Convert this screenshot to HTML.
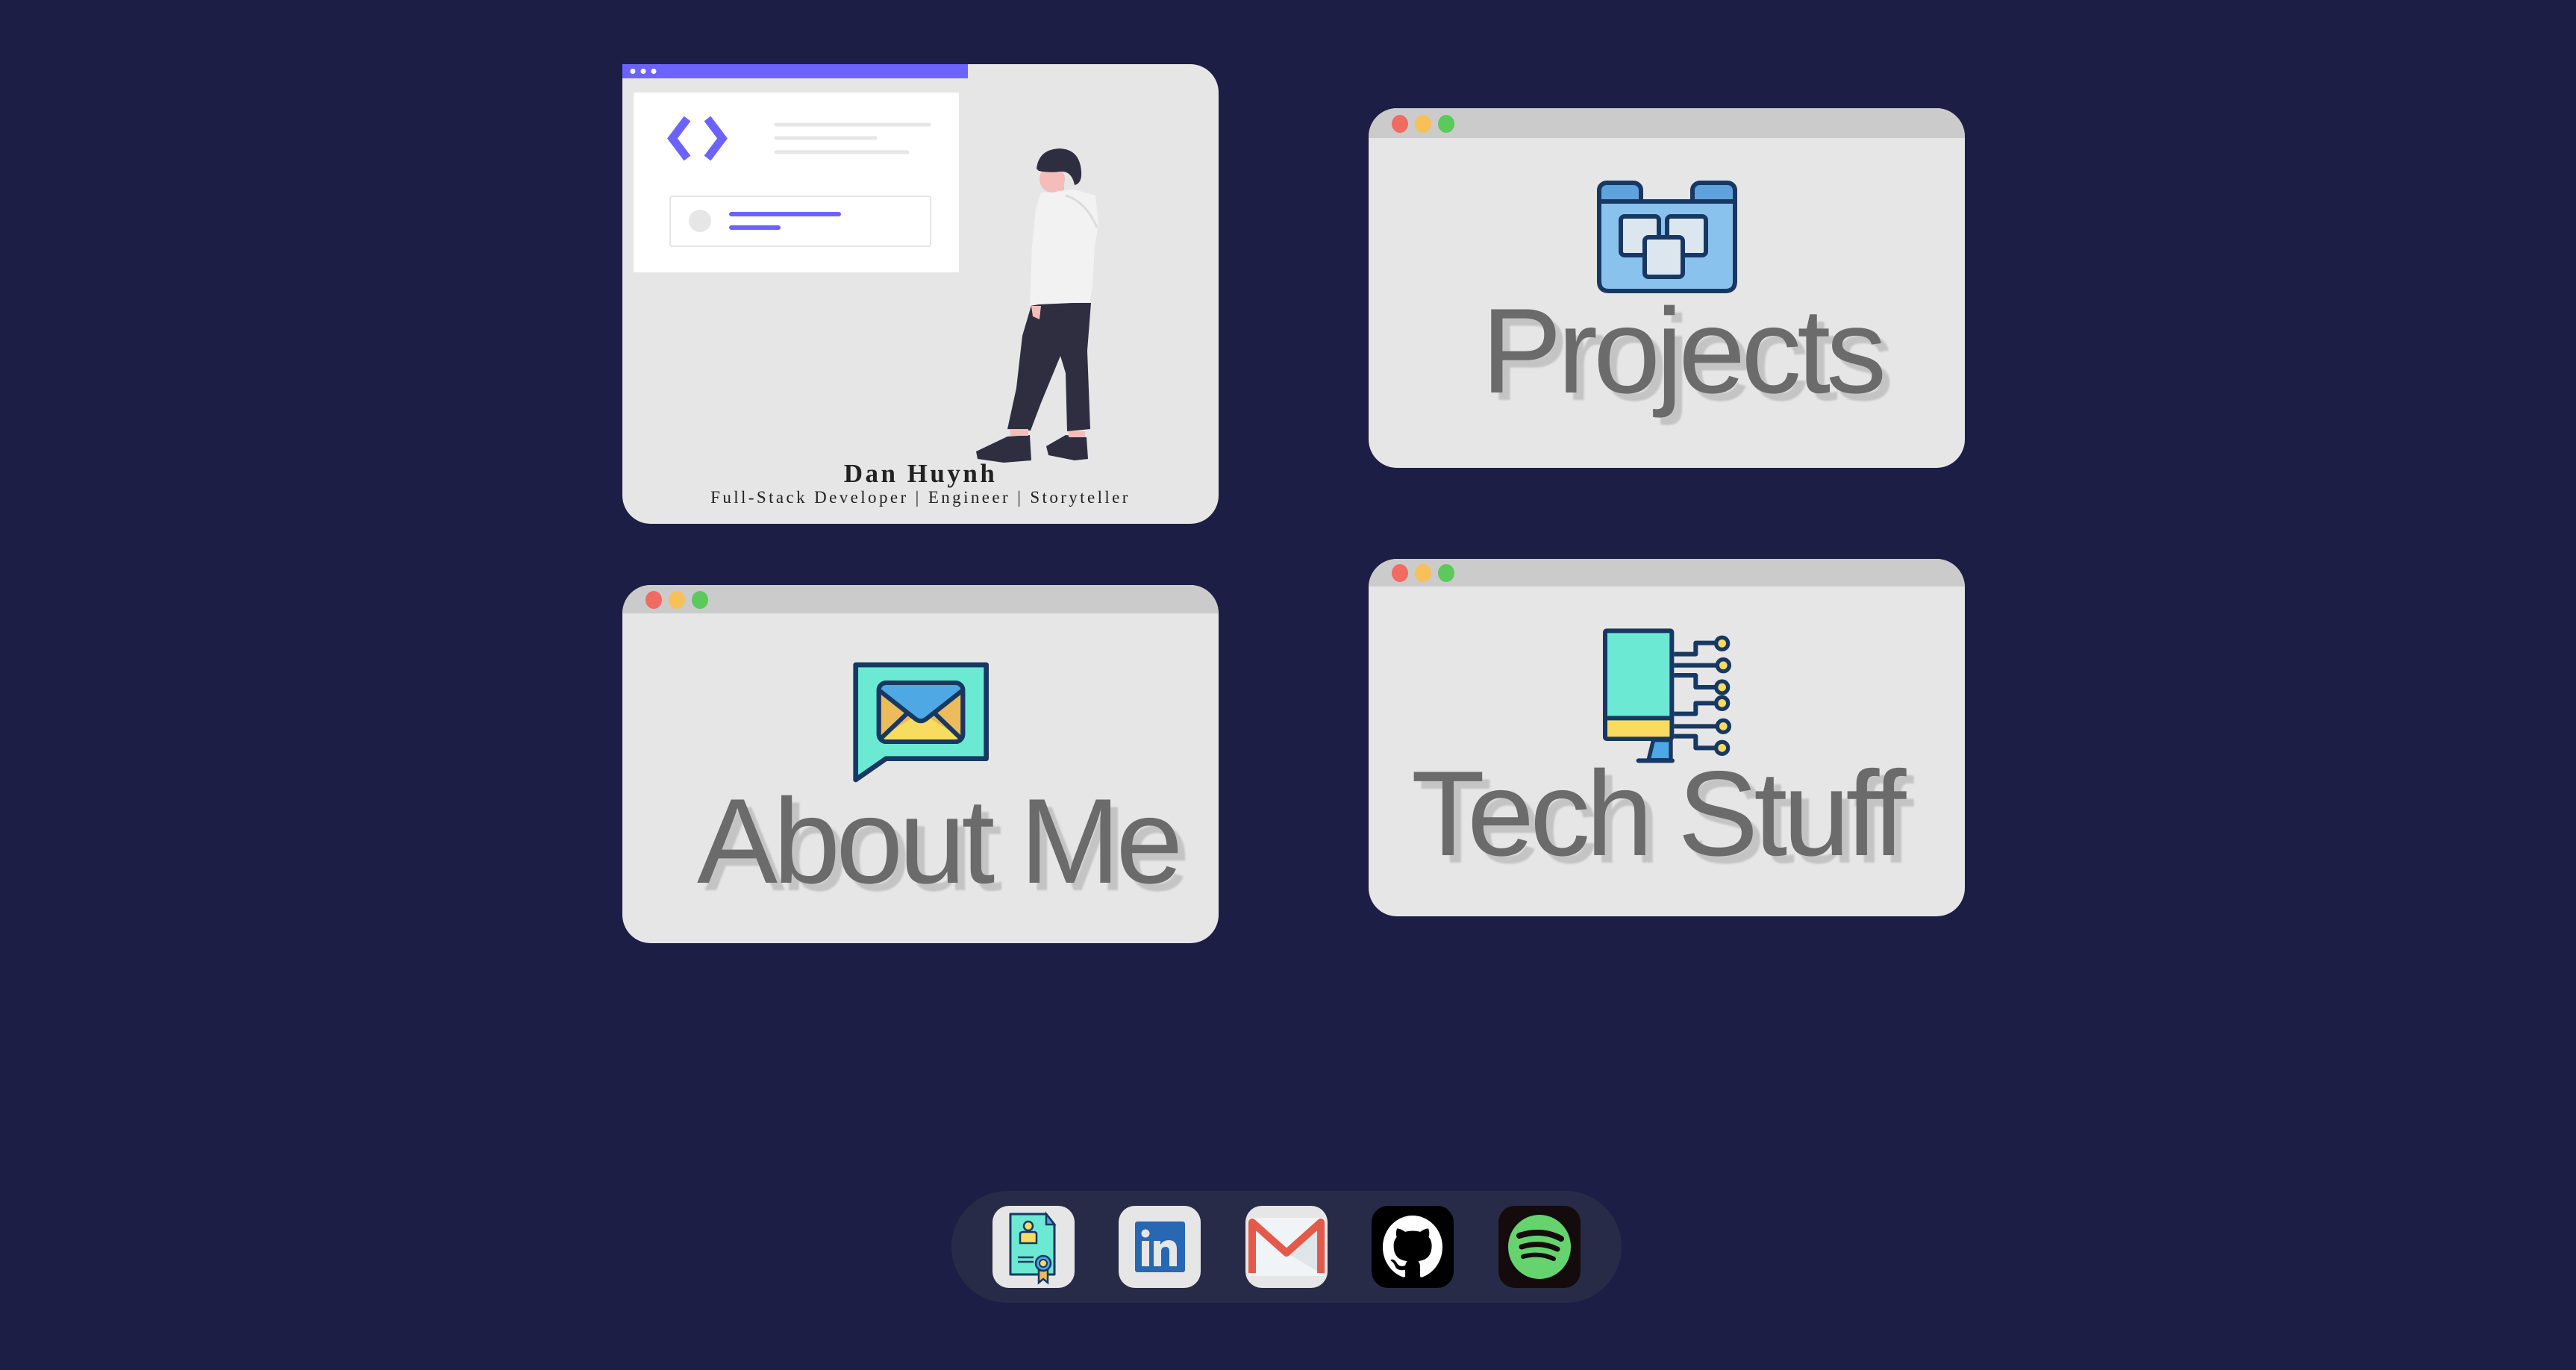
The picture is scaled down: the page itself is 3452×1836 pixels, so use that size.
<!DOCTYPE html>
<html><head><meta charset="utf-8"><style>
html,body{margin:0;padding:0}
body{width:3452px;height:1836px;background:#1c1e45;position:relative;overflow:hidden;font-family:"Liberation Sans",sans-serif}
.card{position:absolute;background:#e6e6e6;border-radius:38px;overflow:hidden}
.bar{position:absolute;left:0;top:0;right:0;background:#cbcbcb}
.dot{position:absolute;width:22px;height:24px;border-radius:50%}
.title{position:absolute;font-size:162px;line-height:1;color:#6b6b6b;letter-spacing:-6px;white-space:nowrap;text-shadow:10px 10px 2px #c4c4c4}
.dock{position:absolute;left:1275px;top:1596px;width:898px;height:150px;border-radius:75px;background:#282b48}
.ic{position:absolute;top:1616px;width:110px;height:110px;border-radius:22px;overflow:hidden}
</style></head><body>

<div class="card" style="left:834px;top:86px;width:799px;height:616px;border-top-left-radius:0"></div>

<div class="card" style="left:1834px;top:145px;width:799px;height:482px">
 <div class="bar" style="height:40px"></div>
 <div class="dot" style="left:31px;top:9px;background:#f16b63"></div>
 <div class="dot" style="left:62px;top:9px;background:#f7c059"></div>
 <div class="dot" style="left:93px;top:9px;background:#5bc95b"></div>
</div>

<div class="card" style="left:834px;top:784px;width:799px;height:480px">
 <div class="bar" style="height:38px"></div>
 <div class="dot" style="left:31px;top:8px;background:#f16b63"></div>
 <div class="dot" style="left:62px;top:8px;background:#f7c059"></div>
 <div class="dot" style="left:93px;top:8px;background:#5bc95b"></div>
</div>

<div class="card" style="left:1834px;top:749px;width:799px;height:479px">
 <div class="bar" style="height:37px"></div>
 <div class="dot" style="left:31px;top:7px;background:#f16b63"></div>
 <div class="dot" style="left:62px;top:7px;background:#f7c059"></div>
 <div class="dot" style="left:93px;top:7px;background:#5bc95b"></div>
</div>

<svg style="position:absolute;left:0;top:0" width="3452" height="1836" viewBox="0 0 3452 1836">
 <rect x="834" y="86" width="463" height="19" fill="#6c63ff"/>
 <circle cx="848" cy="95.5" r="3.5" fill="#fff"/><circle cx="862" cy="95.5" r="3.5" fill="#fff"/><circle cx="876" cy="95.5" r="3.5" fill="#fff"/>
 <rect x="849" y="124" width="436" height="241" fill="#fff"/>
 <polyline points="921,159 901,185.5 921,212" fill="none" stroke="#6c63ff" stroke-width="11"/>
 <polyline points="948,159 968,185.5 948,212" fill="none" stroke="#6c63ff" stroke-width="11"/>
 <g stroke="#e6e6e6" stroke-width="5" stroke-linecap="round">
  <line x1="1040" y1="167" x2="1245" y2="167"/><line x1="1040" y1="185" x2="1173" y2="185"/><line x1="1040" y1="204" x2="1216" y2="204"/>
 </g>
 <rect x="898" y="263" width="349" height="67" rx="3" fill="#fff" stroke="#e6e6e6" stroke-width="2"/>
 <circle cx="938" cy="296" r="15" fill="#e6e6e6"/>
 <g stroke="#6c63ff" stroke-width="6" stroke-linecap="round"><line x1="980" y1="287" x2="1124" y2="287"/><line x1="980" y1="305" x2="1043" y2="305"/></g>
 <path d="M1383,406 L1462,406 L1457,470 L1461,575 L1430,578 L1428,500 L1421,477 L1395,540 L1381,577 L1350,575 L1362,520 L1370,450 Z" fill="#2f2e41"/>
 <path d="M1350,585 L1380,583 L1382,617 L1345,620 L1310,615 L1308,605 Z" fill="#2f2e41"/>
 <path d="M1428,583 L1456,586 L1458,615 L1440,617 L1405,610 L1402,598 Z" fill="#2f2e41"/>
 <rect x="1354" y="575" width="24" height="9" fill="#f4bdb9"/><rect x="1432" y="578" width="22" height="8" fill="#f4bdb9"/>
 <rect x="1410" y="245" width="16" height="18" fill="#f4bdb9"/>
 <path d="M1395,258 L1440,254 L1468,262 L1472,300 L1467,330 L1464,385 L1460,405 L1392,408 L1380,410 L1383,330 L1388,280 Z" fill="#f2f2f2"/>
 <path d="M1428,262 Q1455,270 1470,305" fill="none" stroke="#dcdcdc" stroke-width="3"/>
 <path d="M1382,410 L1395,410 L1393,428 L1384,424 Z" fill="#f4bdb9"/>
 <ellipse cx="1410" cy="240" rx="17" ry="18" fill="#f4bdb9"/>
 <path d="M1389,226 Q1392,200 1420,199 Q1447,200 1449,230 Q1450,246 1440,248 Q1436,228 1420,230 Q1406,232 1392,229 Z" fill="#2f2e41"/>

 <g transform="translate(2140,242)" stroke="#173862" stroke-width="6" stroke-linejoin="round">
  <rect x="3" y="3" width="56" height="36" rx="10" fill="#5ea3dc"/>
  <rect x="128" y="3" width="57" height="36" rx="10" fill="#5ea3dc"/>
  <path d="M3,28 L185,28 L185,135 Q185,148 172,148 L16,148 Q3,148 3,135 Z" fill="#8ac2ee"/>
  <rect x="32" y="48" width="51" height="52" rx="5" fill="#dce6ee"/>
  <rect x="94" y="48" width="52" height="52" rx="5" fill="#dce6ee"/>
  <rect x="64" y="76" width="51" height="53" rx="5" fill="#dce6ee"/>
 </g>

 <svg x="1130" y="875" width="210" height="185" viewBox="0 0 630 555">
  <path d="M50,48 L575,48 L575,425 L172,425 L50,510 Z" fill="#6ce9d3" stroke="#173862" stroke-width="20" stroke-linejoin="round"/>
  <rect x="143" y="120" width="338" height="237" rx="30" fill="#ecbb5b" stroke="#173862" stroke-width="18"/>
  <path d="M150,340 L312,240 L470,340 Q470,350 450,350 L170,350 Q150,350 150,340 Z" fill="#f8dc5f"/>
  <path d="M150,150 Q155,128 180,128 L445,128 Q470,128 470,150 L340,260 Q312,282 284,260 Z" fill="#4da8e3"/>
  <path d="M150,155 L290,265 Q312,282 334,265 L474,155 M150,345 L255,245 M474,345 L370,245" fill="none" stroke="#173862" stroke-width="18" stroke-linecap="round"/>
  <rect x="143" y="120" width="338" height="237" rx="30" fill="none" stroke="#173862" stroke-width="18"/>
 </svg>

 <svg x="2135" y="830" width="200" height="200" viewBox="0 0 600 600">
  <g fill="none" stroke="#173862" stroke-width="18" stroke-linejoin="round">
   <path d="M325,140 H412 V95 H495"/><path d="M325,185 H497"/><path d="M325,225 H412 V273 H495"/>
   <path d="M325,380 H412 V337 H495"/><path d="M325,430 H497"/><path d="M325,470 H412 V517 H495"/>
  </g>
  <g fill="#f8dc5f" stroke="#173862" stroke-width="16">
   <circle cx="518" cy="97" r="24"/><circle cx="523" cy="185" r="24"/><circle cx="518" cy="273" r="24"/>
   <circle cx="518" cy="337" r="24"/><circle cx="523" cy="430" r="24"/><circle cx="518" cy="517" r="24"/>
  </g>
  <path d="M242,485 L222,566 L312,566 L312,485 Z" fill="#4da8e3" stroke="#173862" stroke-width="16" stroke-linejoin="round"/>
  <line x1="182" y1="568" x2="318" y2="568" stroke="#173862" stroke-width="18" stroke-linecap="round"/>
  <rect x="48" y="46" width="268" height="434" rx="6" fill="#6ce9d3" stroke="#173862" stroke-width="18"/>
  <rect x="57" y="406" width="250" height="66" fill="#f8dc5f"/>
  <line x1="48" y1="397" x2="316" y2="397" stroke="#173862" stroke-width="18"/>
 </svg>
</svg>

<div style="position:absolute;left:834px;top:615px;width:799px;text-align:center;font-family:'Liberation Serif',serif;font-size:35px;letter-spacing:3.5px;color:#222;line-height:40px;font-weight:bold">Dan Huynh</div>
<div style="position:absolute;left:834px;top:653px;width:799px;text-align:center;font-family:'Liberation Serif',serif;font-size:23px;letter-spacing:3.4px;color:#222;line-height:28px">Full-Stack Developer | Engineer | Storyteller</div>

<div class="title" style="left:1985px;top:390px">Projects</div>
<div class="title" style="left:934px;top:1047px">About Me</div>
<div class="title" style="left:1891px;top:1010px">Tech Stuff</div>

<div class="dock"></div>
<div class="ic" style="left:1330px;background:#e6e6e6">
 <svg width="110" height="110" viewBox="0 0 110 110">
  <path d="M24,11 L72,11 L83,25 L83,92 L24,92 Z" fill="#6ce9d3" stroke="#173862" stroke-width="3" stroke-linejoin="round"/>
  <path d="M72,11 L72,25 L83,25 Z" fill="#4da8e3" stroke="#173862" stroke-width="2.5"/>
  <circle cx="48" cy="27" r="6" fill="#f8dc5f" stroke="#173862" stroke-width="2.5"/>
  <path d="M37,50 L37,38 Q37,35 41,35 L55,35 Q59,35 59,38 L59,50 Z" fill="#f8dc5f" stroke="#173862" stroke-width="2.5"/>
  <path d="M34,69 H55 M34,75 H55" stroke="#173862" stroke-width="2.5"/>
  <path d="M62,84 L62,103 L68,98 L74,103 L74,84 Z" fill="#ecbb5b" stroke="#173862" stroke-width="2.5"/>
  <circle cx="68" cy="77" r="10" fill="#4da8e3" stroke="#173862" stroke-width="2.5"/>
  <circle cx="68" cy="77" r="5" fill="#f8dc5f" stroke="#173862" stroke-width="2"/>
 </svg>
</div>
<div class="ic" style="left:1499px;background:#e6e6e6">
 <svg width="110" height="110" viewBox="0 0 110 110">
  <rect x="22" y="21" width="67" height="68" rx="3" fill="#2867b2"/>
  <circle cx="36" cy="37" r="5.5" fill="#e6e6e6"/>
  <rect x="31" y="47" width="10" height="34" fill="#e6e6e6"/>
  <path d="M47,47 H56 V52 Q60,46 67,46 Q78,46 78,58 V81 H68 V61 Q68,55 63,55 Q57,55 57,61 V81 H47 Z" fill="#e6e6e6"/>
 </svg>
</div>
<div class="ic" style="left:1669px;background:#e6e6e6">
 <svg width="110" height="110" viewBox="0 0 110 110">
  <rect x="4" y="16" width="103" height="78" rx="4" fill="#f1f4f6"/>
  <path d="M55,63 L107,94 L107,22 Z" fill="#dfe5e8"/>
  <path d="M9,90 L9,22 L55,63 L101,22 L101,90" fill="none" stroke="#e35a4a" stroke-width="10" stroke-linejoin="round"/>
 </svg>
</div>
<div class="ic" style="left:1838px;background:#000">
 <svg width="110" height="110" viewBox="0 0 110 110">
  <g transform="translate(15,13) scale(5,5.3)"><path fill="#fff" d="M8 0C3.58 0 0 3.58 0 8c0 3.54 2.29 6.530 5.47 7.59.4.07.55-.17.55-.38 0-.19-.01-.82-.01-1.49-2.01.37-2.53-.49-2.69-.94-.09-.23-.48-.94-.82-1.13-.28-.15-.68-.52-.01-.53.63-.01 1.08.58 1.23.82.72 1.21 1.87.87 2.33.66.07-.52.28-.87.51-1.07-1.78-.2-3.64-.89-3.64-3.95 0-.87.31-1.59.82-2.15-.08-.2-.36-1.02.08-2.12 0 0 .67-.21 2.2.82.64-.18 1.32-.27 2-.27.68 0 1.36.09 2 .27 1.53-1.04 2.2-.82 2.2-.82.44 1.1.16 1.92.08 2.12.51.56.82 1.27.82 2.15 0 3.07-1.87 3.75-3.65 3.95.29.25.54.73.54 1.48 0 1.07-.01 1.93-.01 2.2 0 .21.15.46.55.38A8.013 8.013 0 0016 8c0-4.42-3.58-8-8-8z"/></g>
 </svg>
</div>
<div class="ic" style="left:2008px;background:#140c0c">
 <svg width="110" height="110" viewBox="0 0 110 110">
  <ellipse cx="55" cy="55" rx="42" ry="43" fill="#65d46e"/>
  <g fill="none" stroke="#140c0c" stroke-linecap="round">
   <path d="M28,40 Q58,30 84,44" stroke-width="8"/>
   <path d="M31,55 Q56,47 79,58" stroke-width="7"/>
   <path d="M33,68 Q55,62 74,71" stroke-width="6"/>
  </g>
 </svg>
</div>
</body></html>
